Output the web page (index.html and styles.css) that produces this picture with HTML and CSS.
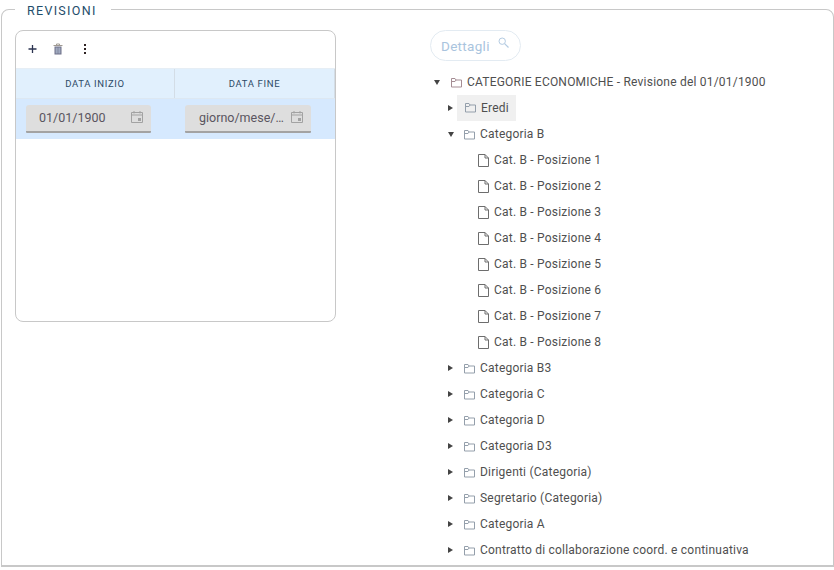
FILE: index.html
```html
<!DOCTYPE html>
<html lang="it">
<head>
<meta charset="utf-8">
<title>Revisioni</title>
<link rel="stylesheet" href="styles.css">
</head>
<body>
<svg class="defs" width="0" height="0" aria-hidden="true">
  <symbol id="folder" viewBox="0 0 11 11"><path d="M.5 10V1.500h3.500l1 1.500h5.500v7z M.5 4.500h3.500l1-1.500" fill="none" stroke="currentColor" stroke-width="1"/></symbol>
  <symbol id="file" viewBox="0 0 11 13"><path d="M.5 .5h6.500l3.500 3.500v8.500h-10z M7 .5v3.500h3.500" fill="none" stroke="currentColor" stroke-width="1"/></symbol>
  <symbol id="cal" viewBox="0 0 12 12"><path d="M.5 1.500h11v10h-11z M.5 4h11 M3 0v2.500 M9 0v2.500" fill="none" stroke="currentColor" stroke-width="1"/><path d="M7 7h3v3h-3z" fill="currentColor"/></symbol>
</svg>
<fieldset class="panel">
  <legend class="panel-title">REVISIONI</legend>
  <div class="columns">
    <section class="card">
      <div class="toolbar">
        <svg class="tool" viewBox="0 0 10 12"><path d="M5.500 2v8M1.500 6h8" stroke="#2b3350" stroke-width="1.300" fill="none"/></svg>
        <svg class="tool" viewBox="0 0 10 12"><path d="M.5 2.500h9M3.500 2.500V1h3v1.500" stroke="#a09a92" stroke-width="1" fill="none"/><path d="M1.500 3.500h7v8h-7z" fill="#6f7189"/><path d="M3.200 4.500v6M5 4.500v6M6.800 4.500v6" stroke="#c6d8ec" stroke-width=".8"/></svg>
        <svg class="tool" viewBox="0 0 10 12"><path d="M5 1h2v2H5zM5 5h2v2H5zM5 9h2v2H5z" fill="#2e2222"/></svg>
      </div>
      <div class="thead">
        <div class="th">DATA INIZIO</div>
        <div class="th">DATA FINE</div>
      </div>
      <div class="tr">
        <div class="td"><div class="date"><span class="date-text">01/01/1900</span><svg class="cal"><use href="#cal"/></svg></div></div>
        <div class="td"><div class="date"><span class="date-text">giorno/mese/…</span><svg class="cal"><use href="#cal"/></svg></div></div>
      </div>
    </section>
    <section class="tree-pane">
      <div class="search"><span>Dettagli</span><svg class="search-icon" viewBox="0 0 11 11"><circle cx="4.200" cy="4.200" r="3.200" fill="none" stroke="#b4cbe2" stroke-width="1"/><path d="M6.600 6.600l3.900 3.900" stroke="#b4cbe2" stroke-width="1.200"/></svg></div>
      <ul class="tree">
        <li class="node root"><i class="arrow down"></i><svg class="ico root-ico"><use href="#folder"/></svg><span>CATEGORIE ECONOMICHE - Revisione del 01/01/1900</span></li>
        <li class="node lvl1"><i class="arrow right"></i><span class="hl"><svg class="ico"><use href="#folder"/></svg><span>Eredi</span></span></li>
        <li class="node lvl1"><i class="arrow down"></i><svg class="ico"><use href="#folder"/></svg><span>Categoria B</span></li>
        <li class="node leaf"><svg class="ico-file"><use href="#file"/></svg><span>Cat. B - Posizione 1</span></li>
        <li class="node leaf"><svg class="ico-file"><use href="#file"/></svg><span>Cat. B - Posizione 2</span></li>
        <li class="node leaf"><svg class="ico-file"><use href="#file"/></svg><span>Cat. B - Posizione 3</span></li>
        <li class="node leaf"><svg class="ico-file"><use href="#file"/></svg><span>Cat. B - Posizione 4</span></li>
        <li class="node leaf"><svg class="ico-file"><use href="#file"/></svg><span>Cat. B - Posizione 5</span></li>
        <li class="node leaf"><svg class="ico-file"><use href="#file"/></svg><span>Cat. B - Posizione 6</span></li>
        <li class="node leaf"><svg class="ico-file"><use href="#file"/></svg><span>Cat. B - Posizione 7</span></li>
        <li class="node leaf"><svg class="ico-file"><use href="#file"/></svg><span>Cat. B - Posizione 8</span></li>
        <li class="node lvl1"><i class="arrow right"></i><svg class="ico"><use href="#folder"/></svg><span>Categoria B3</span></li>
        <li class="node lvl1"><i class="arrow right"></i><svg class="ico"><use href="#folder"/></svg><span>Categoria C</span></li>
        <li class="node lvl1"><i class="arrow right"></i><svg class="ico"><use href="#folder"/></svg><span>Categoria D</span></li>
        <li class="node lvl1"><i class="arrow right"></i><svg class="ico"><use href="#folder"/></svg><span>Categoria D3</span></li>
        <li class="node lvl1"><i class="arrow right"></i><svg class="ico"><use href="#folder"/></svg><span>Dirigenti (Categoria)</span></li>
        <li class="node lvl1"><i class="arrow right"></i><svg class="ico"><use href="#folder"/></svg><span>Segretario (Categoria)</span></li>
        <li class="node lvl1"><i class="arrow right"></i><svg class="ico"><use href="#folder"/></svg><span>Categoria A</span></li>
        <li class="node lvl1"><i class="arrow right"></i><svg class="ico"><use href="#folder"/></svg><span>Contratto di collaborazione coord. e continuativa</span></li>
      </ul>
    </section>
  </div>
</fieldset>
</body>
</html>
```

FILE: styles.css
```css
* { box-sizing: border-box; }
html, body { margin: 0; padding: 0; height: 570px; overflow: hidden; background: #fff; }
body { font-family: Roboto, "Liberation Sans", sans-serif; color: #4a4a4a; }
.defs { position: absolute; }

.panel {
  margin: 0 0 0 1px;
  width: 833px;
  height: 567px;
  padding: 0 13px;
  border: 1px solid #c8c8c8;
  border-bottom-width: 2px;
  border-radius: 8px 8px 0 0;
  min-width: 0;
}
.panel-title {
  margin-left: 0;
  padding: 2px 14px 0 12px;
  font-size: 12.500px;
  line-height: 17px;
  letter-spacing: 1.300px;
  color: #1f4e6b;
}
.columns { display: flex; align-items: flex-start; padding-top: 11px; }

.card {
  width: 321px;
  height: 292px;
  flex: none;
  border: 1px solid #c8c8c8;
  border-radius: 8px;
  overflow: hidden;
}
.toolbar { height: 37px; display: flex; align-items: center; padding: 0 0 2px 11px; gap: 16px; }
.tool { width: 10px; height: 12px; flex: none; }
.thead, .tr { display: grid; grid-template-columns: 159px 1fr; }
.thead { height: 30px; background: #e1f0fd; border-top: 1px solid #e6eef5; }
.th {
  display: flex; align-items: center; justify-content: center;
  font-size: 9.500px; font-weight: 400; letter-spacing: .65px; color: #2d4a66;
  border-right: 1px solid #d3dde6;
}
.tr { height: 41px; background: #d6e9fe; padding-top: 6px; border-top: 1px solid #dde8f2; }
.td { padding-left: 10px; }
.date {
  width: 125px; height: 28px;
  background: #dedede;
  border-bottom: 2px solid #a3a3a3;
  border-radius: 3px 3px 1px 1px;
  display: flex; align-items: center; justify-content: space-between;
  padding: 0 8px 2px 13px;
  font-size: 12.500px; color: #5a5560;
}
.td:nth-child(2) .date { width: 126px; padding-left: 14px; }
.cal { width: 12px; height: 12px; color: #a2a2a2; flex: none; }

.tree-pane { margin-left: 94px; flex: 1; }
.search {
  width: 91px; height: 31px;
  border: 1px solid #e3ebf2;
  border-radius: 16px;
  display: flex; align-items: center;
  padding-left: 10px; gap: 8px;
  font-size: 13.500px; letter-spacing: .3px; color: #a9c4de;
}
.search-icon { width: 11px; height: 11px; margin-top: -7px; }
.tree { list-style: none; margin: 8px 0 0; padding: 0; font-size: 12px; letter-spacing: .21px; color: #4f4f4f; }
.node { height: 26px; display: flex; align-items: center; white-space: nowrap; }
.root { padding-left: 4px; }
.lvl1 { padding-left: 18px; }
.leaf { padding-left: 48px; }
.hl { display: flex; align-items: center; height: 26px; background: #f0f0f0; padding: 0 7px 0 8px; margin-left: -7px; margin-top: -1px; }
.arrow { display: block; width: 0; height: 0; flex: none; }
.arrow.right { border-left: 5px solid #444; border-top: 3.500px solid transparent; border-bottom: 3.500px solid transparent; margin-right: 11px; }
.arrow.down { border-top: 5px solid #444; border-left: 3.500px solid transparent; border-right: 3.500px solid transparent; margin-right: 10px; }
.root .arrow.down { margin-right: 11px; }
.ico { width: 11px; height: 11px; flex: none; margin-right: 5px; color: #949fab; }
.root-ico { color: #a58d94; }
.ico-file { width: 11px; height: 13px; flex: none; margin-right: 5px; color: #6d6d6d; }
```
